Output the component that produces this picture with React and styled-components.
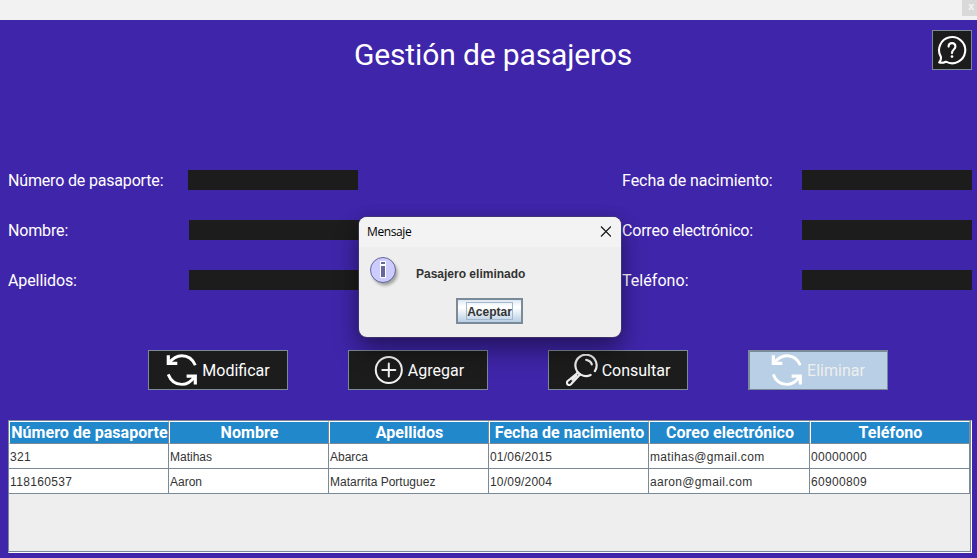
import React from 'react';
import styled, { createGlobalStyle } from 'styled-components';

const Global = createGlobalStyle`
  * { box-sizing: border-box; }
  html, body { margin: 0; padding: 0; overflow: hidden; }
  button { margin: 0; padding: 0; font: inherit; border-radius: 0; }
`;

const Window = styled.div`
  position: relative;
  width: 977px;
  height: 558px;
  overflow: hidden;
  display: flex;
  flex-direction: column;
  background: #3f25a9;
  color: #fff;
  font-family: Roboto, sans-serif;
  font-size: 16px;
`;

const TitleStrip = styled.div`
  flex: none;
  height: 20px;
  background: #f2f2f2;
  display: flex;
  justify-content: flex-end;
`;

const CloseTab = styled.div`
  width: 15px;
  height: 16px;
  background: #d9d9d9;
  color: #f3f3f3;
  font: bold 10px/13px 'DejaVu Sans', sans-serif;
  padding-left: 6px;
`;

const Header = styled.header`
  flex: none;
  height: 140px;
  padding: 10px 5px 0 49px;
  display: flex;
  justify-content: space-between;
  align-items: flex-start;
`;

const Heading = styled.h1`
  flex: 1;
  margin: 0 0 0 5px;
  text-align: center;
  font-size: 30px;
  font-weight: 400;
  line-height: 50px;
  letter-spacing: -0.13px;
`;

const HelpButton = styled.button`
  width: 40px;
  height: 40px;
  background: #1c1c1c;
  border: 1px solid #7a8a99;
  display: flex;
  align-items: center;
  justify-content: center;
`;

const Form = styled.form`
  flex: none;
  height: 190px;
  padding: 0 5px 0 8px;
  display: flex;
  justify-content: space-between;
`;

const FieldColumn = styled.div`
  display: flex;
  flex-direction: column;
  gap: 10px;
  width: 350px;
`;

const Field = styled.label`
  display: flex;
  justify-content: space-between;
  align-items: center;
  width: 351px;
  height: 40px;
  padding-right: ${(p) => (p.$shift ? 0 : 1)}px;
  letter-spacing: ${(p) => p.$spacing}px;
  white-space: nowrap;
`;

const Input = styled.input`
  width: 170px;
  height: 20px;
  border: 0;
  padding: 0;
  background: #1c1c1c;
  color: #fff;
`;

const Actions = styled.div`
  flex: none;
  height: 70px;
  padding-left: 148px;
  display: flex;
  gap: 60px;
`;

const ActionButton = styled.button`
  width: 140px;
  height: 40px;
  display: flex;
  align-items: center;
  justify-content: center;
  gap: 4px;
  color: ${(p) => (p.$pressed ? '#eeeeee' : '#fff')};
  background: ${(p) => (p.$pressed ? '#b8cfe5' : '#1c1c1c')};
  border: 1px solid #7a8a99;
  border-width: ${(p) => (p.$pressed ? '2px 1px 1px 2px' : '1px')};
  padding-bottom: ${(p) => (p.$pressed ? '1px' : '0')};
  padding-right: ${(p) => (p.$pressed ? '1px' : '0')};
  svg { flex: none; color: #fff; }
`;

const TableFrame = styled.div`
  width: 964px;
  height: 133px;
  margin-left: 8px;
  background: #eee;
  border: 1px solid #7a8a99;
  border-right: 1px solid #fff;
  border-bottom: 1px solid #fff;
  display: flex;
`;

const TableInner = styled.div`
  flex: 1;
  border-right: 1px solid #7a8a99;
  border-bottom: 1px solid #7a8a99;
`;

const Row = styled.div`
  display: grid;
  grid-template-columns: 160px 160px 160px 160px 161px 160px;
`;

const HeadCell = styled.div`
  height: 23px;
  background: #2288cc;
  border-top: 1px solid #fff;
  border-left: 1px solid #fff;
  border-right: 1px solid #7a8a99;
  border-bottom: 1px solid #7a8a99;
  font-weight: 700;
  font-size: 16px;
  line-height: 21px;
  letter-spacing: 0.04px;
  text-align: center;
  white-space: nowrap;
  overflow: hidden;
  padding: 0 0 0 1px;
`;

const Cell = styled.div`
  height: 25px;
  padding: 1px 0 0 1px;
  background: #fff;
  color: #333;
  border-right: 1px solid #7a8a99;
  border-bottom: 1px solid #7a8a99;
  font: 12px/25px 'Liberation Sans', Arial, sans-serif;
  letter-spacing: ${(p) => p.$spacing}px;
  white-space: nowrap;
`;

const Dialog = styled.section`
  position: absolute;
  left: 359px;
  top: 217px;
  width: 262px;
  height: 120px;
  border-radius: 8px;
  background: #eee;
  box-shadow: 0 0 0 1px rgba(70, 65, 105, 0.65), 0 14px 24px rgba(0, 0, 0, 0.36), 0 2px 16px rgba(0, 0, 0, 0.16);
  overflow: hidden;
  color: #333;
`;

const DialogBar = styled.div`
  height: 30px;
  background: #f3f3f3;
  padding: 0 10px 1px 8px;
  display: flex;
  justify-content: space-between;
  align-items: center;
  color: #000;
  font: 12px 'Open Sans', sans-serif;
  letter-spacing: -0.4px;
  svg { margin-top: -1px; }
`;

const DialogBody = styled.div`
  height: 51px;
  padding: 9px 0 0 10px;
  display: flex;
  gap: 16px;
`;

const Message = styled.p`
  margin: 11px 0 0;
  font: bold 12px/14px 'Liberation Sans', Arial, sans-serif;
`;

const DialogFooter = styled.div`
  display: flex;
  padding-left: 97px;
`;

const AcceptButton = styled.button`
  width: 67px;
  height: 26px;
  border: 2px solid #7a8a99;
  background: linear-gradient(#dde8f3 0, #fff 30%, #fff 35%, #b8cfe5 100%);
  display: flex;
  align-items: center;
  justify-content: center;
  color: #333;
`;

const FocusLabel = styled.span`
  width: 47px;
  height: 18px;
  border: 1px solid #a3b8cc;
  font: bold 12px/18px 'Liberation Sans', Arial, sans-serif;
  display: flex;
  justify-content: center;
`;

const SyncIcon = () => (
  <svg width="32" height="32" viewBox="0 0 32 32" fill="none" stroke="currentColor" strokeWidth="2.9">
    <path d="M29.3 11.2C26.8 5.2 21.6 1.7 15.8 1.7C10.4 1.7 6.6 4.3 3.2 9" />
    <path d="M2.3 1.2V9.4H11.3" strokeWidth="3.2" />
    <path d="M2.2 20.4C4.7 26.8 9.8 30.4 15.8 30.4C21.2 30.4 25.4 27.4 28.7 22.6" />
    <path d="M20.6 22.1H29.3V30.4" strokeWidth="3.2" />
  </svg>
);

const PlusIcon = () => (
  <svg width="32" height="32" viewBox="0 0 32 32" fill="none" stroke="#f3f3f3" strokeWidth="2">
    <circle cx="16.8" cy="16" r="13" />
    <path d="M16.8 9.5V22.5M10.3 16H23.3" strokeLinecap="round" />
  </svg>
);

const SearchIcon = () => (
  <svg width="32" height="32" viewBox="0 0 32 32" fill="none" stroke="#eee" strokeWidth="2.2" strokeLinecap="round" strokeLinejoin="round">
    <path d="M24.6 20.9A10.6 10.6 0 1 1 28.9 17.1" />
    <path d="M20.2 5.9C23.2 6.4 25 7.9 25.8 10.4" />
    <path d="M12 18.7L1.7 27C0.1 28.6 1 31 3.2 31C4.5 31 5.1 30.3 5.8 29.3L14 20.4" />
    <path d="M11.5 18.3L14.1 20.7M10.4 21.5L6.3 25.6" />
  </svg>
);

const HelpIcon = () => (
  <svg width="32" height="32" viewBox="0 0 32 32" fill="none" stroke="#fff" strokeWidth="2.1" strokeLinecap="round" strokeLinejoin="round">
    <path d="M4.9 22.9A13.1 13.1 0 1 1 9.9 27.7C7.8 28.7 5.3 29.1 3.2 28.5C4.5 27 5.3 25.1 4.9 22.9Z" />
    <path d="M12.6 12.6C12.6 8 19.4 8 19.4 12.6C19.4 15.7 16 15.4 16 19.1" />
    <circle cx="16" cy="22.6" r="1.35" fill="#fff" stroke="none" />
  </svg>
);

const InfoIcon = () => (
  <svg width="31" height="32" viewBox="0 0 31 32">
    <defs>
      <filter id="soft" x="-20%" y="-20%" width="150%" height="150%">
        <feGaussianBlur stdDeviation="1.4" />
      </filter>
    </defs>
    <circle cx="16" cy="17" r="12.5" fill="#777" opacity=".65" filter="url(#soft)" />
    <circle cx="14" cy="14" r="12.5" fill="#ccccff" stroke="#666699" />
    <path d="M11 5H17V22H11Z" fill="#fff" />
    <path d="M12 6H16V8H12ZM12 10H16V21H12Z" fill="#666699" />
  </svg>
);

const CrossIcon = () => (
  <svg width="11" height="11" viewBox="0 0 11 11" stroke="#111" strokeWidth="1.15">
    <path d="M1 .5L11 10.5M11 .5L1 10.5" />
  </svg>
);

const leftFields = [['Número de pasaporte:', -0.17], ['Nombre:', -0.15], ['Apellidos:', -0.1]];
const rightFields = [['Fecha de nacimiento:', -0.05], ['Correo electrónico:', -0.2], ['Teléfono:', 0.05]];
const columns = ['Número de pasaporte', 'Nombre', 'Apellidos', 'Fecha de nacimiento', 'Coreo electrónico', 'Teléfono'];
const columnSpacing = [0.35, 0, 0, 0.2, 0.33, 0.32];
const rows = [
  ['321', 'Matihas', 'Abarca', '01/06/2015', 'matihas@gmail.com', '00000000'],
  ['118160537', 'Aaron', 'Matarrita Portuguez', '10/09/2004', 'aaron@gmail.com', '60900809'],
];
const actions = [
  ['Modificar', SyncIcon],
  ['Agregar', PlusIcon],
  ['Consultar', SearchIcon],
  ['Eliminar', SyncIcon],
];

export default function App() {
  return (
    <Window>
      <Global />
      <TitleStrip><CloseTab>x</CloseTab></TitleStrip>
      <Header>
        <Heading>Gestión de pasajeros</Heading>
        <HelpButton type="button" aria-label="Ayuda"><HelpIcon /></HelpButton>
      </Header>
      <Form>
        <FieldColumn>
          {leftFields.map(([label, spacing], i) => (
            <Field key={label} $shift={i > 0} $spacing={spacing}>{label}<Input /></Field>
          ))}
        </FieldColumn>
        <FieldColumn>
          {rightFields.map(([label, spacing]) => (
            <Field key={label} $spacing={spacing}>{label}<Input /></Field>
          ))}
        </FieldColumn>
      </Form>
      <Actions>
        {actions.map(([label, Icon]) => (
          <ActionButton key={label} type="button" $pressed={label === 'Eliminar'}>
            <Icon />{label}
          </ActionButton>
        ))}
      </Actions>
      <TableFrame>
        <TableInner>
          <Row>{columns.map((c) => <HeadCell key={c}>{c}</HeadCell>)}</Row>
          {rows.map((r) => (
            <Row key={r[0]}>
              {r.map((c, i) => <Cell key={c} $spacing={columnSpacing[i]}>{c}</Cell>)}
            </Row>
          ))}
        </TableInner>
      </TableFrame>
      <Dialog role="dialog" aria-label="Mensaje">
        <DialogBar>Mensaje<CrossIcon /></DialogBar>
        <DialogBody>
          <InfoIcon />
          <Message>Pasajero eliminado</Message>
        </DialogBody>
        <DialogFooter>
          <AcceptButton type="button"><FocusLabel>Aceptar</FocusLabel></AcceptButton>
        </DialogFooter>
      </Dialog>
    </Window>
  );
}
